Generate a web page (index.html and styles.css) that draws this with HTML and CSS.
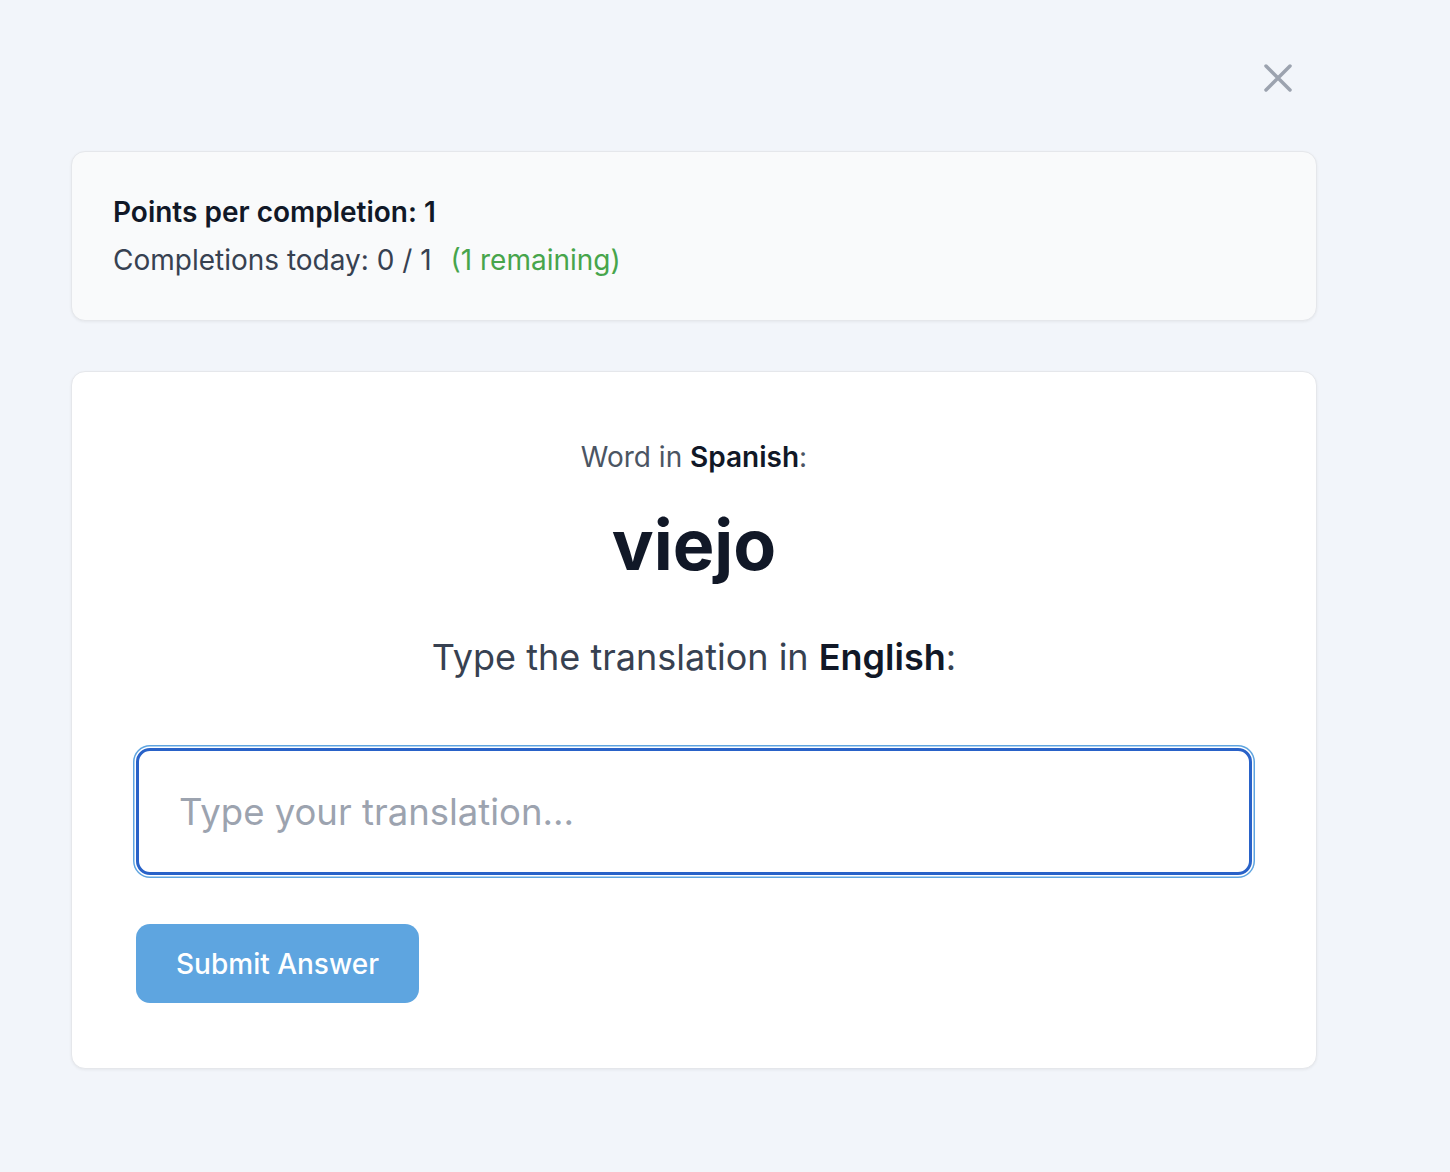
FILE: index.html
```html
<!DOCTYPE html>
<html lang="en">
<head>
    <meta charset="UTF-8">
    <meta name="viewport" content="width=device-width, initial-scale=1.0">
    <title>Translation Challenge</title>
    <link rel="stylesheet" href="styles.css">
</head>
<body>
    <div class="modal">
        <div class="modal-header">
            <button class="close-button" aria-label="Close">
                <svg width="28" height="28" viewBox="0 0 28 28" fill="none" stroke="currentColor" stroke-width="3.5" stroke-linecap="round">
                    <path d="M2 2L26 26M26 2L2 26"/>
                </svg>
            </button>
        </div>

        <!-- Points info -->
        <div class="info-card">
            <div class="info-points">Points per completion: 1</div>
            <div class="info-today">
                Completions today: 0 / 1 <span class="remaining">(1 remaining)</span>
            </div>
        </div>

        <!-- Exercise -->
        <div class="exercise-card">
            <div class="word-label">Word in <strong>Spanish</strong>:</div>
            <div class="word">viejo</div>
            <div class="prompt">Type the translation in <strong>English</strong>:</div>

            <input type="text" class="answer-input" placeholder="Type your translation..." autofocus>

            <button class="submit-button">Submit Answer</button>
        </div>
    </div>
</body>
</html>
```

FILE: styles.css
```css
* {
    margin: 0;
    padding: 0;
    box-sizing: border-box;
}

body {
    font-family: 'Inter', 'Noto Sans', sans-serif;
    background: #f2f5fa;
    color: #374151;
    min-height: 100vh;
}

.modal {
    width: 1246px;
    margin-left: 71px;
    padding-top: 50px;
}

.modal-header {
    display: flex;
    justify-content: flex-end;
    margin-bottom: 45px;
}

.close-button {
    width: 56px;
    height: 56px;
    margin-right: 11px;
    border: none;
    background: none;
    color: #9ca3af;
    display: flex;
    align-items: center;
    justify-content: center;
    cursor: pointer;
}

.info-card {
    background: #f9fafb;
    border: 1px solid #e5e7eb;
    border-radius: 14px;
    box-shadow: 0 1px 3px rgba(0, 0, 0, 0.06);
    padding: 39px 41px;
    display: flex;
    flex-direction: column;
    gap: 6px;
    font-size: 28px;
    line-height: 42px;
}

.info-points {
    font-weight: 600;
    color: #111827;
}

.info-today {
    color: #374151;
}

.remaining {
    color: #47a54b;
    margin-left: 11px;
}

.exercise-card {
    margin-top: 50px;
    background: #fff;
    border: 1px solid #e5e7eb;
    border-radius: 14px;
    box-shadow: 0 1px 3px rgba(0, 0, 0, 0.06);
    padding: 64px 64px 65px;
    display: flex;
    flex-direction: column;
    align-items: center;
}

.word-label {
    font-size: 28px;
    line-height: 42px;
    color: #4b5563;
}

.word-label strong,
.prompt strong {
    font-weight: 600;
    color: #111827;
}

.word {
    margin-top: 25px;
    font-size: 70px;
    line-height: 84px;
    font-weight: 700;
    color: #111827;
}

.prompt {
    margin-top: 43px;
    font-size: 36px;
    line-height: 54px;
    color: #374151;
}

.answer-input {
    margin-top: 64px;
    width: 100%;
    height: 127px;
    padding: 0 40px;
    border: 3px solid #2962c8;
    border-radius: 14px;
    box-shadow: 0 0 0 1.5px #fff, 0 0 0 3px #5ea4e0;
    font-family: inherit;
    font-size: 36.5px;
    color: #111827;
    outline: none;
}

.answer-input::placeholder {
    color: #9ca3af;
}

.submit-button {
    align-self: flex-start;
    margin-top: 49px;
    width: 283px;
    height: 79px;
    border: none;
    border-radius: 14px;
    background: #5ea5e0;
    color: #fff;
    font-family: inherit;
    font-size: 28px;
    font-weight: 500;
    cursor: pointer;
}
```
